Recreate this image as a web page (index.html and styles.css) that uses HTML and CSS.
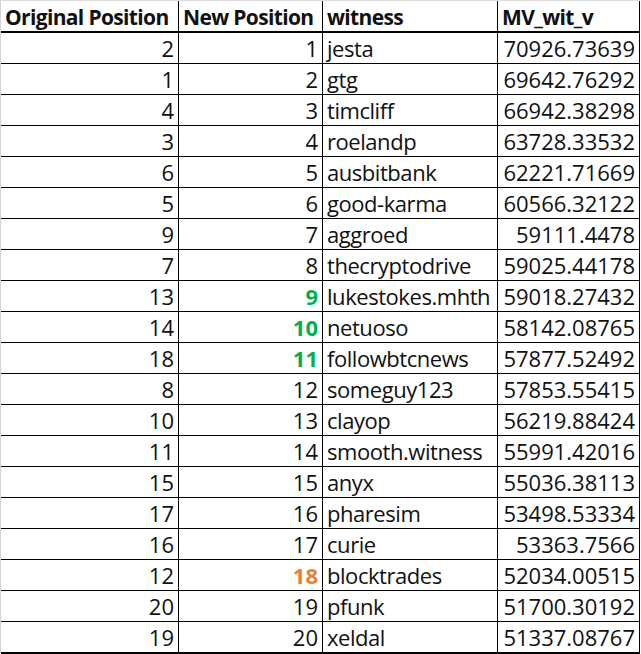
FILE: index.html
```html
<!DOCTYPE html>
<html>
<head>
<meta charset="utf-8">
<link rel="stylesheet" href="styles.css">
</head>
<body>
<table class="sheet">
  <colgroup>
    <col class="c1"><col class="c2"><col class="c3"><col class="c4">
  </colgroup>
  <thead>
    <tr><th>Original Position</th><th>New Position</th><th>witness</th><th>MV_wit_v</th></tr>
  </thead>
  <tbody>
    <tr><td class="num">2</td><td class="num">1</td><td class="name">jesta</td><td class="num">70926.73639</td></tr>
    <tr><td class="num">1</td><td class="num">2</td><td class="name">gtg</td><td class="num">69642.76292</td></tr>
    <tr><td class="num">4</td><td class="num">3</td><td class="name">timcliff</td><td class="num">66942.38298</td></tr>
    <tr><td class="num">3</td><td class="num">4</td><td class="name">roelandp</td><td class="num">63728.33532</td></tr>
    <tr><td class="num">6</td><td class="num">5</td><td class="name">ausbitbank</td><td class="num">62221.71669</td></tr>
    <tr><td class="num">5</td><td class="num">6</td><td class="name">good-karma</td><td class="num">60566.32122</td></tr>
    <tr><td class="num">9</td><td class="num">7</td><td class="name">aggroed</td><td class="num">59111.4478</td></tr>
    <tr><td class="num">7</td><td class="num">8</td><td class="name">thecryptodrive</td><td class="num">59025.44178</td></tr>
    <tr><td class="num">13</td><td class="num up">9</td><td class="name">lukestokes.mhth</td><td class="num">59018.27432</td></tr>
    <tr><td class="num">14</td><td class="num up">10</td><td class="name">netuoso</td><td class="num">58142.08765</td></tr>
    <tr><td class="num">18</td><td class="num up">11</td><td class="name">followbtcnews</td><td class="num">57877.52492</td></tr>
    <tr><td class="num">8</td><td class="num">12</td><td class="name">someguy123</td><td class="num">57853.55415</td></tr>
    <tr><td class="num">10</td><td class="num">13</td><td class="name">clayop</td><td class="num">56219.88424</td></tr>
    <tr><td class="num">11</td><td class="num">14</td><td class="name">smooth.witness</td><td class="num">55991.42016</td></tr>
    <tr><td class="num">15</td><td class="num">15</td><td class="name">anyx</td><td class="num">55036.38113</td></tr>
    <tr><td class="num">17</td><td class="num">16</td><td class="name">pharesim</td><td class="num">53498.53334</td></tr>
    <tr><td class="num">16</td><td class="num">17</td><td class="name">curie</td><td class="num">53363.7566</td></tr>
    <tr><td class="num">12</td><td class="num down">18</td><td class="name">blocktrades</td><td class="num">52034.00515</td></tr>
    <tr><td class="num">20</td><td class="num">19</td><td class="name">pfunk</td><td class="num">51700.30192</td></tr>
    <tr><td class="num">19</td><td class="num">20</td><td class="name">xeldal</td><td class="num">51337.08767</td></tr>
  </tbody>
</table>
</body>
</html>
```
FILE: styles.css
```css
html, body {
  margin: 0;
  padding: 0;
  background: #ffffff;
}

.sheet {
  border-collapse: separate;
  border-spacing: 0;
  table-layout: fixed;
  width: 640px;
  border-top: 1px solid #dcdcdc;
  border-left: 1px solid #d4d4d4;
  font-family: "Open Sans", "Noto Sans", sans-serif;
  font-size: 22px;
  color: #111111;
}

.c1 { width: 178px; }
.c2 { width: 144px; }
.c3 { width: 175px; }
.c4 { width: 142px; }

.sheet th,
.sheet td {
  box-sizing: border-box;
  padding: 0 4px;
  height: 31px;
  line-height: 30px;
  border-right: 1px solid #000000;
  border-bottom: 1px solid #000000;
  white-space: nowrap;
  overflow: hidden;
  vertical-align: bottom;
}

.sheet th {
  height: 32px;
  padding-top: 2px;
  line-height: 28px;
  text-align: left;
  font-size: 21px;
  font-weight: 700;
  letter-spacing: -0.65px;
  border-bottom: 2px solid #000000;
}

.sheet td.num {
  text-align: right;
}

.sheet td.name {
  letter-spacing: -0.45px;
}

.sheet tbody tr:last-child td {
  height: 32px;
  border-bottom: 2px solid #000000;
}

.sheet td.up {
  color: #00b050;
  font-weight: 700;
}

.sheet td.down {
  color: #ed7d31;
  font-weight: 700;
}
```
